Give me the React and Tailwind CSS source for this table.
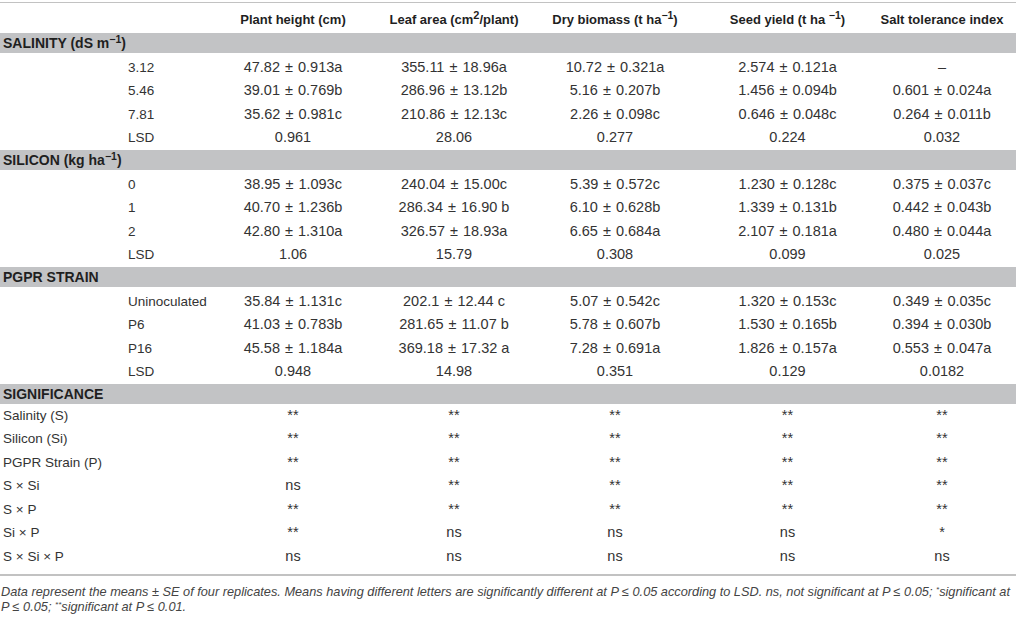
import React from "react";

const GRID = "grid grid-cols-[213px_160px_162px_160px_185px_1fr]";

const sections = [
  {
    title: (
      <>
        SALINITY (dS m<sup className="text-[10.5px]">−1</sup>)
      </>
    ),
    rows: [
      ["3.12", "47.82 ± 0.913a", "355.11 ± 18.96a", "10.72 ± 0.321a", "2.574 ± 0.121a", "–"],
      ["5.46", "39.01 ± 0.769b", "286.96 ± 13.12b", "5.16 ± 0.207b", "1.456 ± 0.094b", "0.601 ± 0.024a"],
      ["7.81", "35.62 ± 0.981c", "210.86 ± 12.13c", "2.26 ± 0.098c", "0.646 ± 0.048c", "0.264 ± 0.011b"],
      ["LSD", "0.961", "28.06", "0.277", "0.224", "0.032"],
    ],
  },
  {
    title: (
      <>
        SILICON (kg ha<sup className="text-[10.5px]">−1</sup>)
      </>
    ),
    rows: [
      ["0", "38.95 ± 1.093c", "240.04 ± 15.00c", "5.39 ± 0.572c", "1.230 ± 0.128c", "0.375 ± 0.037c"],
      ["1", "40.70 ± 1.236b", "286.34 ± 16.90 b", "6.10 ± 0.628b", "1.339 ± 0.131b", "0.442 ± 0.043b"],
      ["2", "42.80 ± 1.310a", "326.57 ± 18.93a", "6.65 ± 0.684a", "2.107 ± 0.181a", "0.480 ± 0.044a"],
      ["LSD", "1.06", "15.79", "0.308", "0.099", "0.025"],
    ],
  },
  {
    title: "PGPR STRAIN",
    rows: [
      ["Uninoculated", "35.84 ± 1.131c", "202.1 ± 12.44 c", "5.07 ± 0.542c", "1.320 ± 0.153c", "0.349 ± 0.035c"],
      ["P6", "41.03 ± 0.783b", "281.65 ± 11.07 b", "5.78 ± 0.607b", "1.530 ± 0.165b", "0.394 ± 0.030b"],
      ["P16", "45.58 ± 1.184a", "369.18 ± 17.32 a", "7.28 ± 0.691a", "1.826 ± 0.157a", "0.553 ± 0.047a"],
      ["LSD", "0.948", "14.98", "0.351", "0.129", "0.0182"],
    ],
  },
];

const significance = [
  ["Salinity (S)", "**", "**", "**", "**", "**"],
  ["Silicon (Si)", "**", "**", "**", "**", "**"],
  ["PGPR Strain (P)", "**", "**", "**", "**", "**"],
  ["S × Si", "ns", "**", "**", "**", "**"],
  ["S × P", "**", "**", "**", "**", "**"],
  ["Si × P", "**", "ns", "ns", "ns", "*"],
  ["S × Si × P", "ns", "ns", "ns", "ns", "ns"],
];

// mean ± SE, a touch more room round the ± like the original typesetting
function Value({ text }) {
  const parts = text.split(" ± ");
  if (parts.length < 2) return <>{text}</>;
  return (
    <>
      {parts[0]} <span className="mx-[1px]">±</span> {parts[1]}
    </>
  );
}

function Band({ children }) {
  return (
    <div className="h-[20px] bg-[#c2c3c5] flex items-center pl-[3px] text-[14px] font-bold text-[#1f1f1f] leading-none">
      <span>{children}</span>
    </div>
  );
}

function DataRow({ row, indent }) {
  return (
    <div className={GRID + " h-[23.5px] items-center text-[13.5px] text-[#333] whitespace-nowrap"}>
      <div className={indent ? "pl-[128px]" : "pl-[3px]"}>{row[0]}</div>
      <div className="text-center text-[14.5px]"><Value text={row[1]} /></div>
      <div className="text-center text-[14.5px]"><Value text={row[2]} /></div>
      <div className="text-center text-[14.5px]"><Value text={row[3]} /></div>
      <div className="text-center text-[14.5px]"><Value text={row[4]} /></div>
      <div className="text-center text-[14.5px] pr-[12px]"><Value text={row[5]} /></div>
    </div>
  );
}

export default function App() {
  return (
    <div className="w-[1016px] h-[621px] bg-white font-['Liberation_Sans',Arial,sans-serif] overflow-hidden">
      <div className="h-[2px]" />
      <div className="h-[1px] bg-[#c2c2c2]" />

      {/* header */}
      <div className={GRID + " h-[30px] items-center pt-[4px] text-[13px] font-bold text-[#1f1f1f] whitespace-nowrap"}>
        <div />
        <div className="text-center">Plant height (cm)</div>
        <div className="text-center">
          Leaf area (cm<sup className="text-[11px]">2</sup>/plant)
        </div>
        <div className="text-center">
          Dry biomass (t ha<sup className="text-[10.5px]">−1</sup>)
        </div>
        <div className="text-center">
          Seed yield (t ha <sup className="text-[10.5px]">−1</sup>)
        </div>
        <div className="text-center pr-[12px]">Salt tolerance index</div>
      </div>

      {sections.map((s, i) => (
        <div key={i}>
          <Band>{s.title}</Band>
          <div className="pt-[3px]">
            {s.rows.map((r, j) => (
              <DataRow key={j} row={r} indent />
            ))}
          </div>
        </div>
      ))}

      <Band>SIGNIFICANCE</Band>
      {significance.map((r, j) => (
        <DataRow key={j} row={r} />
      ))}

      <div className="mt-[5px] h-[2px] bg-[#c2c2c2]" />

      <p className="mt-[8px] pl-[1px] text-[12.75px] leading-[15px] italic text-[#444] whitespace-nowrap">
        Data represent the means ± SE of four replicates. Means having different letters are significantly different at P ≤ 0.05 according to LSD. ns, not significant at P ≤ 0.05; <sup className="text-[8px]">*</sup>significant at
        <br />
        P ≤ 0.05; <sup className="text-[8px]">**</sup>significant at P ≤ 0.01.
      </p>
    </div>
  );
}
